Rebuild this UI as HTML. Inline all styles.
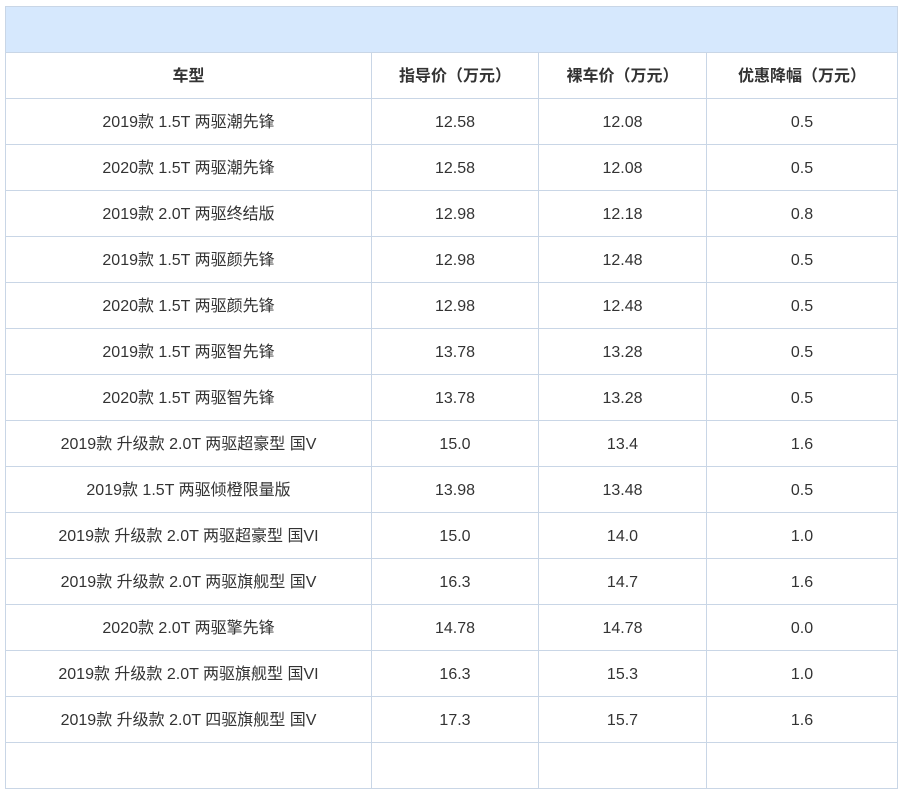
<!DOCTYPE html>
<html><head><meta charset="utf-8"><style>
body{margin:0;background:#fff;font-family:"Liberation Sans","Noto Sans CJK SC",sans-serif;overflow:hidden;height:751px;}
.t{position:absolute;left:5px;top:6px;border-collapse:collapse;table-layout:fixed;width:892px;}
.t td{border:1px solid #c9d6e6;height:43px;padding:2px 0 0 0;text-align:center;font-size:16px;color:#333;line-height:20px;vertical-align:middle;}
.t td span{display:inline-block;height:20px;line-height:20px;vertical-align:top;}
.t tr.cap td{background:#d6e8fd;}
.t tr.h td{font-weight:bold;color:#333;}
</style></head><body>
<table class="t">
<colgroup><col style="width:366px"><col style="width:167px"><col style="width:168px"><col style="width:191px"></colgroup>
<tr class="cap"><td colspan="4"></td></tr>
<tr class="h"><td><span>车型</span></td><td><span>指导价（万元）</span></td><td><span>裸车价（万元）</span></td><td><span>优惠降幅（万元）</span></td></tr>
<tr><td><span>2019款 1.5T 两驱潮先锋</span></td><td>12.58</td><td>12.08</td><td>0.5</td></tr>
<tr><td><span>2020款 1.5T 两驱潮先锋</span></td><td>12.58</td><td>12.08</td><td>0.5</td></tr>
<tr><td><span>2019款 2.0T 两驱终结版</span></td><td>12.98</td><td>12.18</td><td>0.8</td></tr>
<tr><td><span>2019款 1.5T 两驱颜先锋</span></td><td>12.98</td><td>12.48</td><td>0.5</td></tr>
<tr><td><span>2020款 1.5T 两驱颜先锋</span></td><td>12.98</td><td>12.48</td><td>0.5</td></tr>
<tr><td><span>2019款 1.5T 两驱智先锋</span></td><td>13.78</td><td>13.28</td><td>0.5</td></tr>
<tr><td><span>2020款 1.5T 两驱智先锋</span></td><td>13.78</td><td>13.28</td><td>0.5</td></tr>
<tr><td><span>2019款 升级款 2.0T 两驱超豪型 国V</span></td><td>15.0</td><td>13.4</td><td>1.6</td></tr>
<tr><td><span>2019款 1.5T 两驱倾橙限量版</span></td><td>13.98</td><td>13.48</td><td>0.5</td></tr>
<tr><td><span>2019款 升级款 2.0T 两驱超豪型 国VI</span></td><td>15.0</td><td>14.0</td><td>1.0</td></tr>
<tr><td><span>2019款 升级款 2.0T 两驱旗舰型 国V</span></td><td>16.3</td><td>14.7</td><td>1.6</td></tr>
<tr><td><span>2020款 2.0T 两驱擎先锋</span></td><td>14.78</td><td>14.78</td><td>0.0</td></tr>
<tr><td><span>2019款 升级款 2.0T 两驱旗舰型 国VI</span></td><td>16.3</td><td>15.3</td><td>1.0</td></tr>
<tr><td><span>2019款 升级款 2.0T 四驱旗舰型 国V</span></td><td>17.3</td><td>15.7</td><td>1.6</td></tr>
<tr><td></td><td></td><td></td><td></td></tr>
</table>
</body></html>
